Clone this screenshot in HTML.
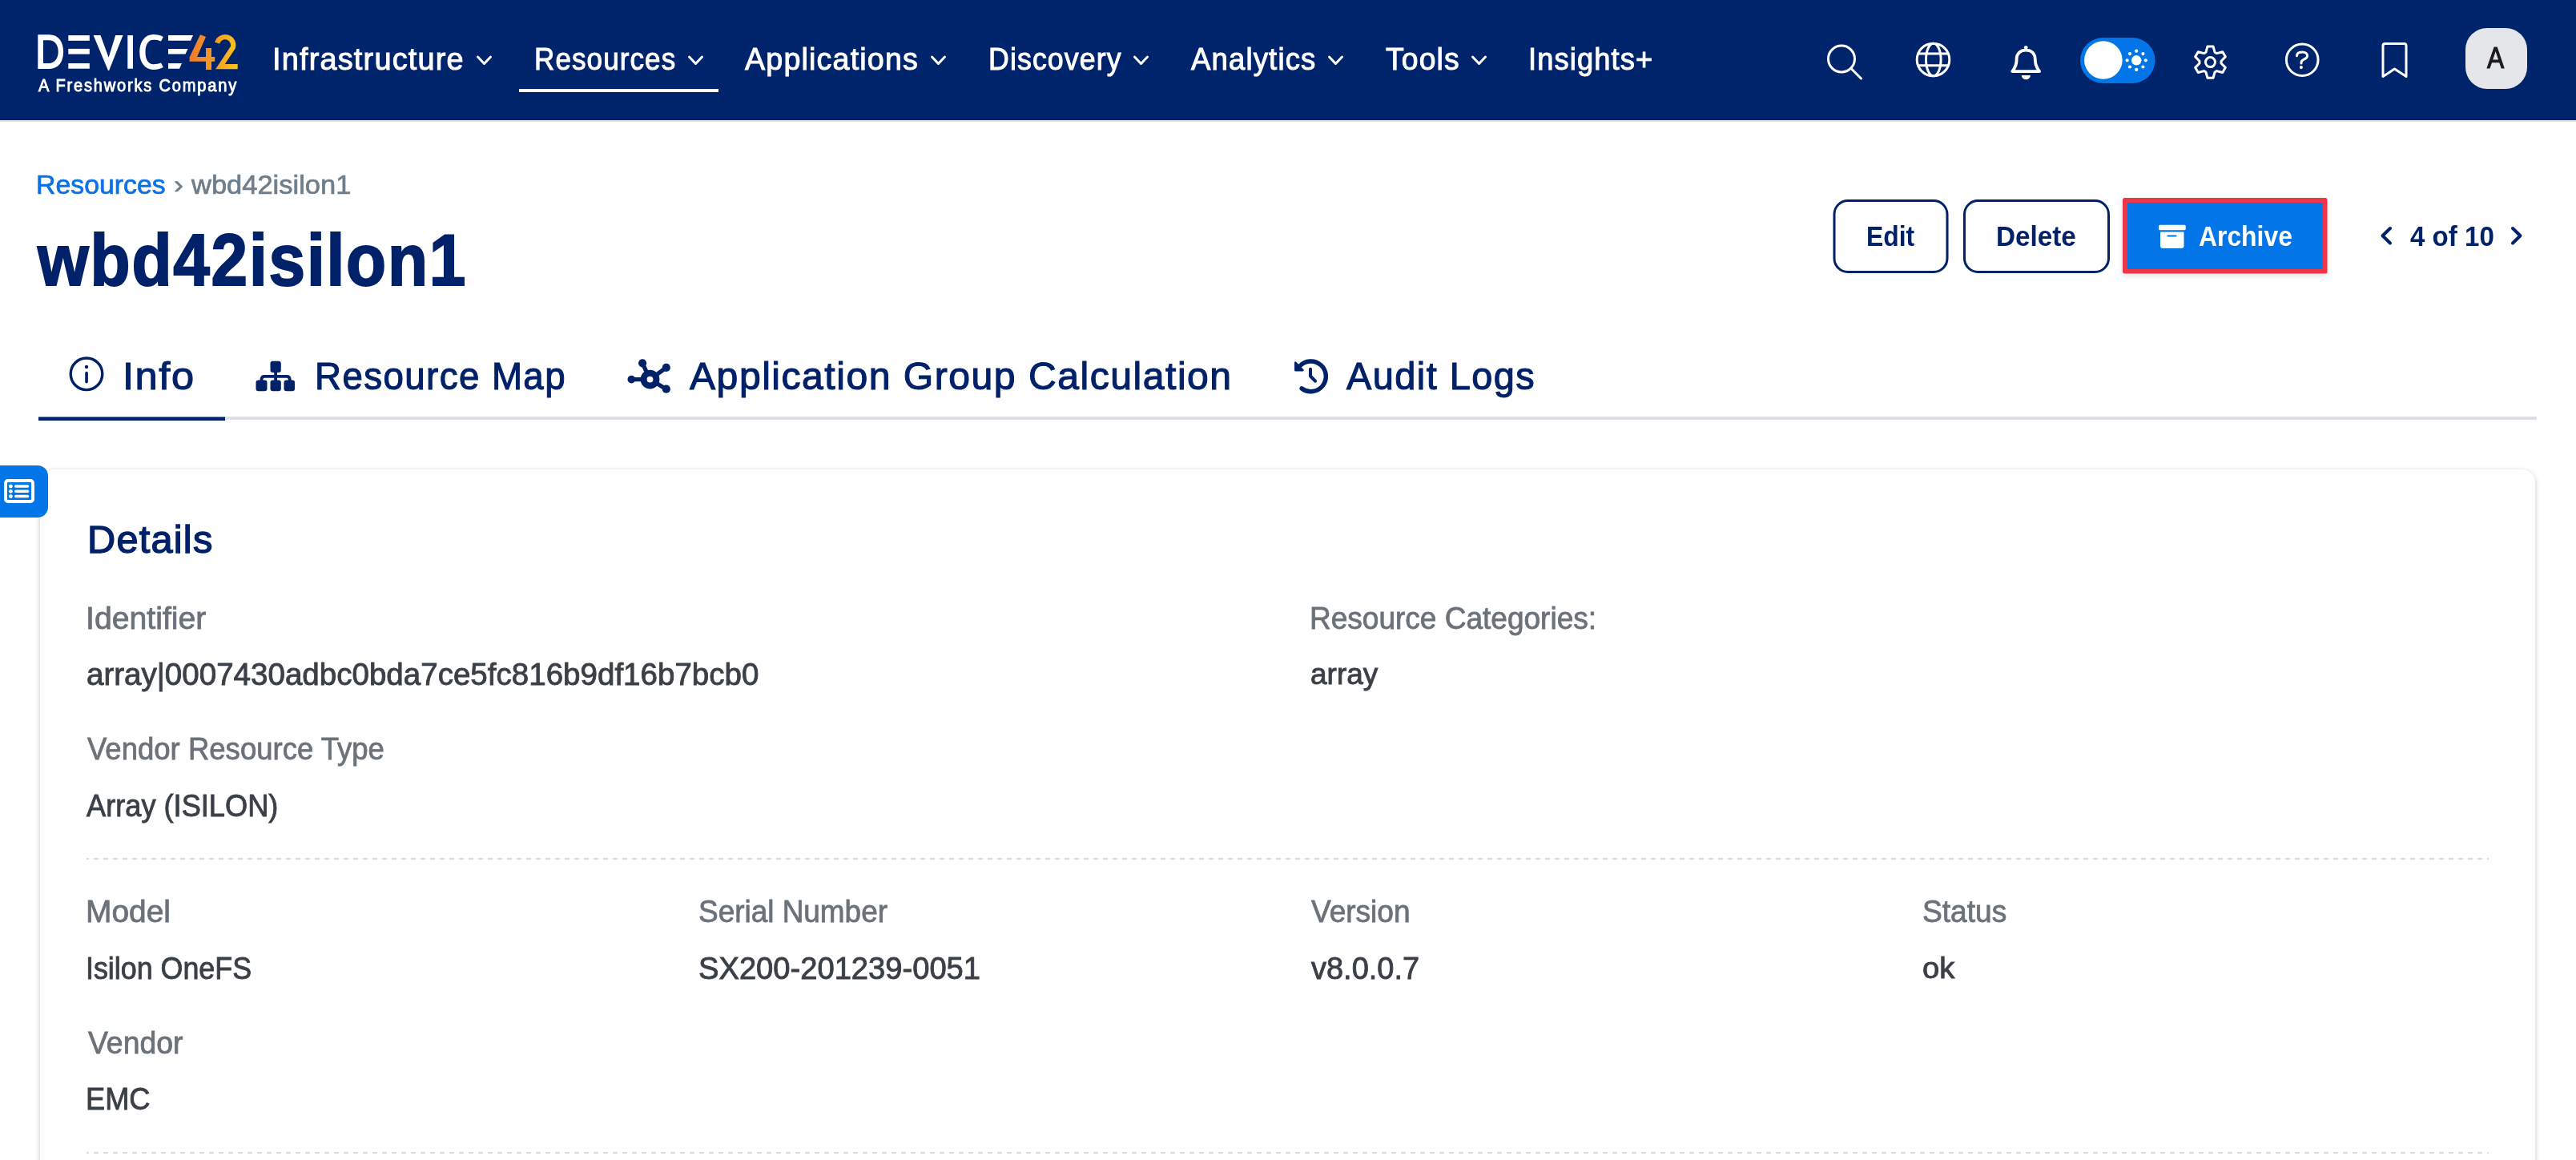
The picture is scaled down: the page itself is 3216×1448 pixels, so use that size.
<!DOCTYPE html>
<html><head><meta charset="utf-8"><style>
html,body{margin:0;padding:0;background:#fff;width:3216px;height:1448px;overflow:hidden;position:relative;font-family:"Liberation Sans",sans-serif}
.abs{position:absolute}
.t{position:absolute;white-space:nowrap;line-height:1;transform-origin:0 0;font-family:"Liberation Sans",sans-serif}
.hdr{position:absolute;left:0;top:0;width:3216px;height:150px;background:#00246b;border-bottom:2px solid #dfe3e8}
.card{position:absolute;left:50px;top:586px;width:3115px;height:1000px;background:#fff;border-radius:16px;box-shadow:0 2px 6px rgba(0,0,0,0.24)}
.side{position:absolute;left:0;top:581px;width:60px;height:65px;background:#0275e8;border-radius:0 13px 13px 0}
.dash{position:absolute;left:108px;width:2999px;height:2px;background:repeating-linear-gradient(to right,#d6dce1 0 3px,transparent 3px 9px,#d6dce1 9px 12px)}
</style></head><body>
<div class="hdr"></div>
<div class="card"></div>
<div class="side"></div>
<svg class="abs" style="left:0;top:581px" width="60" height="65" viewBox="0 581 60 65">
  <rect x="7" y="600" width="34" height="26" rx="3" fill="none" stroke="#fff" stroke-width="4"/>
  <g fill="#fff"><circle cx="13.4" cy="607" r="2.4"/><circle cx="13.4" cy="613.3" r="2.4"/><circle cx="13.4" cy="619.6" r="2.4"/>
  <rect x="18" y="605.3" width="18.2" height="3.5" rx="1.7"/><rect x="18" y="611.5" width="18.2" height="3.5" rx="1.7"/><rect x="18" y="617.8" width="18.2" height="3.5" rx="1.7"/></g>
</svg>
<div class="dash" style="top:1071px"></div>
<div class="dash" style="top:1438px"></div>

<svg class="abs" style="left:0;top:0" width="3216" height="150" viewBox="0 0 3216 150">
  <defs>
    <linearGradient id="lg42" x1="236" y1="0" x2="297" y2="0" gradientUnits="userSpaceOnUse">
      <stop offset="0" stop-color="#ef7a2c"/><stop offset="0.5" stop-color="#f39a25"/><stop offset="1" stop-color="#fcc418"/>
    </linearGradient>
  </defs>
  <g fill="#fff">
    <path fill-rule="evenodd" d="M47.3 43.3H61.5C73 43.3 79.1 52 79.1 64.6C79.1 77.5 73 86 61.5 86H47.3ZM54 50.25H61C68.5 50.25 72.7 56 72.7 64.6C72.7 73 68.5 79 61 79H54Z"/>
    <rect x="85.3" y="44.1" width="26.5" height="6.7"/><rect x="85.3" y="60.9" width="26.5" height="6.7"/><rect x="85.3" y="79" width="26.5" height="6.7"/>
    <path d="M116.6 44.1H125.5L135.6 71.8L144.2 44.1H153.5L136.2 88H135Z"/>
    <rect x="159.3" y="44.1" width="6.7" height="41.6"/>
    <path d="M203.9 46C200 43.8 196 43 191.5 43C181 43 174.25 52 174.25 65C174.25 78 181 86.9 191.5 86.9C196 86.9 200 86.1 203.9 84L201 78.5C198 79.8 195 80.2 191.5 80.2C185 80.2 181.5 74 181.5 65C181.5 56 185 49.8 191.5 49.8C195 49.8 198 50.2 201 51.5Z"/>
    <path d="M210 44.1H241.1L238 50.8H210Z"/><path d="M210 60.9H234.5L231.5 67.6H210Z"/><path d="M210 79H227L224 85.7H210Z"/>
  </g>
  <path d="M271.15 53.6A10.2 10.2 0 0 1 290.85 59.14L275 83.1H296.7" fill="none" stroke="url(#lg42)" stroke-width="6.3" stroke-linejoin="miter" stroke-miterlimit="8"/>
  <g fill="url(#lg42)">
    <path d="M250 43.3L257 46L246 70.9H257V60H264V70.9H268.2V76.8H264V86.9H257V76.8H236.6V71.5Z"/>
    
  </g>
  <g fill="none" stroke="#fff" stroke-width="3" stroke-linecap="round" stroke-linejoin="round">
    <polyline points="596.5,71 604.5,79.5 612.5,71"/>
    <polyline points="860.5,71 868.5,79.5 876.5,71"/>
    <polyline points="1163.5,71 1171.5,79.5 1179.5,71"/>
    <polyline points="1416.5,71 1424.5,79.5 1432.5,71"/>
    <polyline points="1659.5,71 1667.5,79.5 1675.5,71"/>
    <polyline points="1838.5,71 1846.5,79.5 1854.5,71"/>
  </g>
  <rect x="648" y="111" width="249" height="4" fill="#fff"/>
  <g fill="none" stroke="#fff" stroke-width="3" stroke-linecap="round" stroke-linejoin="round">
    <circle cx="2299" cy="73.5" r="16.5"/><line x1="2311" y1="85.5" x2="2323.5" y2="98"/>
    <circle cx="2413.5" cy="74.5" r="20.3"/><ellipse cx="2413.8" cy="74.5" r="0" rx="9.3" ry="20.3"/>
    <line x1="2395.5" y1="67" x2="2431.5" y2="67"/><line x1="2395.5" y1="81.8" x2="2431.5" y2="81.8"/>
    <path stroke-width="3.8" d="M2512.3 89.1H2546.1C2543 85 2540.8 81 2540.8 75V73.5C2540.8 67 2536 62.7 2529.2 62.7C2522.4 62.7 2517.6 67 2517.6 73.5V75C2517.6 81 2515.4 85 2512.3 89.1Z"/>
  </g>
  <g fill="#fff"><path d="M2523.8 93.9H2534.9A5.55 5.4 0 0 1 2523.8 93.9Z"/><circle cx="2529.2" cy="59.3" r="2.4"/></g>
  <rect x="2597" y="47" width="93.5" height="57" rx="28.5" fill="#0275e8"/>
  <circle cx="2625.9" cy="75" r="23.8" fill="#fff"/>
  <g fill="#fff">
    <circle cx="2667.2" cy="75.3" r="6.2"/>
    <circle cx="2678.80" cy="75.30" r="2.1"/><circle cx="2675.40" cy="83.50" r="2.1"/><circle cx="2667.20" cy="86.90" r="2.1"/><circle cx="2659.00" cy="83.50" r="2.1"/><circle cx="2655.60" cy="75.30" r="2.1"/><circle cx="2659.00" cy="67.10" r="2.1"/><circle cx="2667.20" cy="63.70" r="2.1"/><circle cx="2675.40" cy="67.10" r="2.1"/>
  </g>
  <g fill="none" stroke="#fff" stroke-width="3" stroke-linecap="round" stroke-linejoin="round">
    <path d="M2753.97 65.18 L2755.96 57.92 L2763.04 57.92 L2765.03 65.18 L2767.49 66.60 L2774.78 64.69 L2778.32 70.83 L2773.03 76.18 L2773.03 79.02 L2778.32 84.37 L2774.78 90.51 L2767.49 88.60 L2765.03 90.02 L2763.04 97.28 L2755.96 97.28 L2753.97 90.02 L2751.51 88.60 L2744.22 90.51 L2740.68 84.37 L2745.97 79.02 L2745.97 76.18 L2740.68 70.83 L2744.22 64.69 L2751.51 66.60Z"/>
    <circle cx="2759.5" cy="77.6" r="6"/>
    <circle cx="2874.2" cy="74.7" r="19.8"/>
    <path d="M2867.5 69.8C2867.5 66.5 2870.5 65 2874.3 65C2878 65 2880.6 66.8 2880.6 69.6C2880.6 72.5 2877.8 73.6 2875.6 74.6C2873.9 75.4 2873 76.3 2873 78.3V79"/>
    <path d="M2975 95.5V57.2C2975 55.5 2976.2 54.5 2977.8 54.5H3001.3C3002.9 54.5 3004 55.5 3004 57.2V95.5L2989.5 86Z"/>
  </g>
  <circle cx="2872.9" cy="84.1" r="2.1" fill="#fff"/>
  <rect x="3078" y="34.9" width="77" height="76.1" rx="27" fill="#e4e6ea"/>
</svg>

<svg class="abs" style="left:0;top:150" width="3216" height="1298" viewBox="0 150 3216 1298">
  <!-- archive button -->
  <rect x="2290" y="250.5" width="141" height="89" rx="17" fill="#fff" stroke="#012169" stroke-width="3"/>
  <rect x="2452.5" y="250.5" width="180" height="89" rx="17" fill="#fff" stroke="#012169" stroke-width="3"/>
  <rect x="2650" y="247" width="255.5" height="94.5" rx="2.5" fill="#f0364a" filter="url(#sh)"/>
  <rect x="2656" y="253" width="243.5" height="83" fill="#0275e8"/>
  <defs>
    <filter id="sh" x="-10%" y="-20%" width="120%" height="150%"><feDropShadow dx="0" dy="3" stdDeviation="3" flood-color="#000" flood-opacity="0.12"/></filter>
  </defs>
  <g fill="#fff">
    <rect x="2695" y="280.8" width="33.7" height="6.4" rx="1.5"/>
    <path d="M2697 289.5H2726.5V307C2726.5 308.8 2725.2 310 2723.5 310H2700C2698.3 310 2697 308.8 2697 307Z"/>
  </g>
  <rect x="2705.5" y="293.6" width="12" height="2" rx="1" fill="#0275e8"/>
  <g fill="none" stroke="#012169" stroke-width="4" stroke-linecap="round" stroke-linejoin="round">
    <polyline points="2984,285 2974.5,294.2 2984,303.5"/>
    <polyline points="3137,285 3146.5,294.2 3137,303.5"/>
  </g>
  <!-- tabs -->
  <rect x="48" y="520" width="3119" height="4" fill="#dcdfe4"/>
  <rect x="48" y="520.5" width="233" height="4.5" fill="#012169"/>
  <g fill="none" stroke="#012169" stroke-width="3.4">
    <circle cx="108" cy="466.8" r="19.8"/>
  </g>
  <circle cx="108" cy="458" r="2.2" fill="#012169"/>
  <rect x="106.2" y="463.8" width="3.7" height="14.6" rx="1.85" fill="#012169"/>
  <g fill="#012169">
    <rect x="337.5" y="450.8" width="13.3" height="14.2" rx="3"/>
    <rect x="319.5" y="474.5" width="14" height="13.8" rx="3"/>
    <rect x="337.5" y="474.5" width="13.3" height="13.8" rx="3"/>
    <rect x="354.5" y="474.5" width="13.5" height="13.8" rx="3"/>
  </g>
  <g fill="none" stroke="#012169" stroke-width="3.8">
    <path d="M326.5 476V473.5Q326.5 469.8 330.2 469.8H358Q361.7 469.8 361.7 473.5V476M344.1 464V476"/>
  </g>
  <g fill="none" stroke="#012169" stroke-width="5.2" stroke-linecap="round">
    <line x1="788.4" y1="473.6" x2="811.5" y2="473.6"/>
    <line x1="802.1" y1="453.3" x2="811.5" y2="473.6"/>
    <line x1="831.8" y1="458.9" x2="811.5" y2="473.6"/>
    <line x1="831.8" y1="485.7" x2="811.5" y2="473.6"/>
  </g>
  <g fill="#012169">
    <circle cx="788.4" cy="473.6" r="4.9"/><circle cx="802.1" cy="453.3" r="5.1"/><circle cx="831.8" cy="458.9" r="5.1"/><circle cx="831.8" cy="485.7" r="5.1"/>
    <circle cx="811.5" cy="473.6" r="11.9"/>
  </g>
  <circle cx="811.5" cy="473.6" r="3.9" fill="#fff"/>
  <g fill="none" stroke="#012169" stroke-linecap="round" stroke-linejoin="round">
    <path stroke-width="5.5" d="M1622.6 457A18.9 18.9 0 1 1 1625.2 485"/>
    <polyline stroke-width="4" points="1636,460.8 1636,469.5 1642,475.7"/>
  </g>
  <path fill="#012169" stroke="#012169" stroke-width="2.5" stroke-linejoin="round" d="M1617.3 452.5L1626.5 462.2H1617.3Z"/>
  <!-- dashed lines -->
</svg>
<div class="t" style="left:48.36px;top:95.72px;font-size:22.24px;font-weight:400;color:#ffffff;transform:scaleX(0.9023);-webkit-text-stroke:0.9px #ffffff;letter-spacing:2.0px;">A Freshworks Company</div><div class="t" style="left:339.99px;top:55.33px;font-size:38.23px;font-weight:400;color:#ffffff;transform:scaleX(0.9911);-webkit-text-stroke:1.0px #ffffff;letter-spacing:1.2px;">Infrastructure</div><div class="t" style="left:666.57px;top:55.33px;font-size:38.23px;font-weight:400;color:#ffffff;transform:scaleX(0.9162);-webkit-text-stroke:1.0px #ffffff;letter-spacing:1.2px;">Resources</div><div class="t" style="left:930.40px;top:55.33px;font-size:38.23px;font-weight:400;color:#ffffff;transform:scaleX(0.9844);-webkit-text-stroke:1.0px #ffffff;letter-spacing:1.2px;">Applications</div><div class="t" style="left:1233.52px;top:55.33px;font-size:38.23px;font-weight:400;color:#ffffff;transform:scaleX(0.9334);-webkit-text-stroke:1.0px #ffffff;letter-spacing:1.2px;">Discovery</div><div class="t" style="left:1487.39px;top:55.33px;font-size:38.23px;font-weight:400;color:#ffffff;transform:scaleX(0.9558);-webkit-text-stroke:1.0px #ffffff;letter-spacing:1.2px;">Analytics</div><div class="t" style="left:1729.65px;top:55.33px;font-size:38.23px;font-weight:400;color:#ffffff;transform:scaleX(0.9746);-webkit-text-stroke:1.0px #ffffff;letter-spacing:1.2px;">Tools</div><div class="t" style="left:1908.12px;top:55.33px;font-size:38.23px;font-weight:400;color:#ffffff;transform:scaleX(0.9479);-webkit-text-stroke:1.0px #ffffff;letter-spacing:1.2px;">Insights+</div><div class="t" style="left:3105.39px;top:53.67px;font-size:37.06px;font-weight:400;color:#1b1b1b;transform:scaleX(0.8575);-webkit-text-stroke:1.1px #1b1b1b;">A</div><div class="t" style="left:45.07px;top:213.59px;font-size:33.14px;font-weight:400;color:#0a72e6;transform:scaleX(1.0212);-webkit-text-stroke:0.7px #0a72e6;">Resources</div><div class="t" style="left:216.82px;top:214.75px;font-size:31.83px;font-weight:400;color:#6e7e8b;transform:scaleX(1.1205);-webkit-text-stroke:0.6px #6e7e8b;">›</div><div class="t" style="left:239.45px;top:213.59px;font-size:33.14px;font-weight:400;color:#6e7e8b;transform:scaleX(1.0406);-webkit-text-stroke:0.7px #6e7e8b;">wbd42isilon1</div><div class="t" style="left:47.11px;top:279.70px;font-size:90.12px;font-weight:700;color:#012169;transform:scaleX(0.9090);-webkit-text-stroke:2.0px #012169;letter-spacing:2px;">wbd42isilon1</div><div class="t" style="left:2329.85px;top:277.85px;font-size:35.61px;font-weight:700;color:#012169;transform:scaleX(0.8933);">Edit</div><div class="t" style="left:2492.25px;top:277.85px;font-size:35.61px;font-weight:700;color:#012169;transform:scaleX(0.9344);">Delete</div><div class="t" style="left:2745.20px;top:277.85px;font-size:35.61px;font-weight:700;color:#ffffff;transform:scaleX(0.8946);">Archive</div><div class="t" style="left:3008.50px;top:278.46px;font-size:34.88px;font-weight:700;color:#012169;transform:scaleX(0.9486);">4 of 10</div><div class="t" style="left:152.89px;top:444.85px;font-size:48.55px;font-weight:400;color:#012169;transform:scaleX(1.0422);-webkit-text-stroke:1.1px #012169;letter-spacing:1.5px;">Info</div><div class="t" style="left:392.75px;top:444.85px;font-size:48.55px;font-weight:400;color:#012169;transform:scaleX(0.9410);-webkit-text-stroke:1.1px #012169;letter-spacing:1.5px;">Resource Map</div><div class="t" style="left:860.93px;top:444.85px;font-size:48.55px;font-weight:400;color:#012169;transform:scaleX(0.9920);-webkit-text-stroke:1.1px #012169;letter-spacing:1.5px;">Application Group Calculation</div><div class="t" style="left:1681.41px;top:444.85px;font-size:48.55px;font-weight:400;color:#012169;transform:scaleX(0.9663);-webkit-text-stroke:1.1px #012169;letter-spacing:1.5px;">Audit Logs</div><div class="t" style="left:108.70px;top:650.18px;font-size:47.38px;font-weight:400;color:#012169;transform:scaleX(1.0277);-webkit-text-stroke:1.4px #012169;letter-spacing:1.2px;">Details</div><div class="t" style="left:106.78px;top:752.96px;font-size:38.08px;font-weight:400;color:#6b727a;transform:scaleX(1.0298);-webkit-text-stroke:0.8px #6b727a;">Identifier</div><div class="t" style="left:1635.33px;top:753.46px;font-size:38.08px;font-weight:400;color:#6b727a;transform:scaleX(0.9722);-webkit-text-stroke:0.8px #6b727a;">Resource Categories:</div><div class="t" style="left:108.95px;top:915.96px;font-size:38.08px;font-weight:400;color:#6b727a;transform:scaleX(0.9593);-webkit-text-stroke:0.8px #6b727a;">Vendor Resource Type</div><div class="t" style="left:106.70px;top:1119.46px;font-size:38.08px;font-weight:400;color:#6b727a;transform:scaleX(1.0217);-webkit-text-stroke:0.8px #6b727a;">Model</div><div class="t" style="left:871.73px;top:1118.96px;font-size:38.08px;font-weight:400;color:#6b727a;transform:scaleX(0.9696);-webkit-text-stroke:0.8px #6b727a;">Serial Number</div><div class="t" style="left:1637.20px;top:1118.96px;font-size:38.08px;font-weight:400;color:#6b727a;transform:scaleX(0.9722);-webkit-text-stroke:0.8px #6b727a;">Version</div><div class="t" style="left:2399.72px;top:1118.96px;font-size:38.08px;font-weight:400;color:#6b727a;transform:scaleX(0.9743);-webkit-text-stroke:0.8px #6b727a;">Status</div><div class="t" style="left:109.71px;top:1282.96px;font-size:38.08px;font-weight:400;color:#6b727a;transform:scaleX(0.9813);-webkit-text-stroke:0.8px #6b727a;">Vendor</div><div class="t" style="left:108.31px;top:822.69px;font-size:38.81px;font-weight:400;color:#3b4048;transform:scaleX(0.9935);-webkit-text-stroke:0.9px #3b4048;">array|0007430adbc0bda7ce5fc816b9df16b7bcb0</div><div class="t" style="left:1636.38px;top:824.29px;font-size:36.92px;font-weight:400;color:#3b4048;transform:scaleX(1.0022);-webkit-text-stroke:0.9px #3b4048;">array</div><div class="t" style="left:108.33px;top:986.69px;font-size:38.81px;font-weight:400;color:#3b4048;transform:scaleX(0.9330);-webkit-text-stroke:0.9px #3b4048;">Array (ISILON)</div><div class="t" style="left:106.60px;top:1189.69px;font-size:38.81px;font-weight:400;color:#3b4048;transform:scaleX(0.9233);-webkit-text-stroke:0.9px #3b4048;">Isilon OneFS</div><div class="t" style="left:871.73px;top:1189.69px;font-size:38.81px;font-weight:400;color:#3b4048;transform:scaleX(0.9831);-webkit-text-stroke:0.9px #3b4048;">SX200-201239-0051</div><div class="t" style="left:1637.35px;top:1189.69px;font-size:38.81px;font-weight:400;color:#3b4048;transform:scaleX(0.9787);-webkit-text-stroke:0.9px #3b4048;">v8.0.0.7</div><div class="t" style="left:2399.85px;top:1191.29px;font-size:36.92px;font-weight:400;color:#3b4048;transform:scaleX(1.0319);-webkit-text-stroke:0.9px #3b4048;">ok</div><div class="t" style="left:106.93px;top:1353.19px;font-size:38.81px;font-weight:400;color:#3b4048;transform:scaleX(0.9334);-webkit-text-stroke:0.9px #3b4048;">EMC</div>
</body></html>
